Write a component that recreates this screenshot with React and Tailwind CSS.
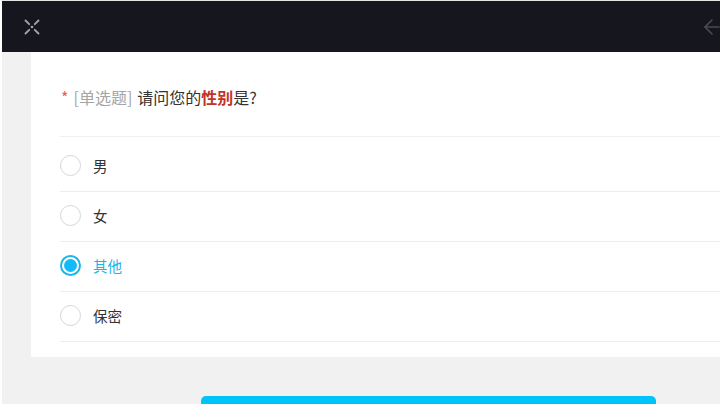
import { ArrowLeft } from 'lucide-react'

const options = [
  { label: '男', checked: false },
  { label: '女', checked: false },
  { label: '其他', checked: true },
  { label: '保密', checked: false },
]

function CloseIcon() {
  return (
    <svg width="20" height="20" viewBox="0 0 20 20" fill="none" stroke="#a3a3a8" strokeWidth="1.9" strokeLinecap="round">
      <path d="M3.5 3.5 L7.2 7.2" />
      <path d="M16.5 3.5 L12.8 7.2" />
      <path d="M3.5 16.5 L7.2 12.8" />
      <path d="M16.5 16.5 L12.8 12.8" />
      <circle cx="10" cy="10" r="1.3" fill="#a3a3a8" stroke="none" />
    </svg>
  )
}

function Radio({ checked }) {
  if (checked) {
    return (
      <span className="flex items-center justify-center w-[21px] h-[21px] rounded-full border-2 border-[#15b7ec] bg-white">
        <span className="w-[13px] h-[13px] rounded-full bg-[#0fbcf9]" />
      </span>
    )
  }
  return <span className="w-[21px] h-[21px] rounded-full border-[1.5px] border-[#d6d6d6] bg-white" />
}

function App() {
  return (
    <div
      className="w-[720px] h-[404px] overflow-hidden flex flex-col bg-[#f1f1f1] border-t border-[#e4e4e4] border-l-2 border-l-white"
      style={{ fontFamily: '"Noto Sans CJK SC", "Noto Sans", sans-serif' }}
    >
      {/* Top bar */}
      <header className="h-[51px] shrink-0 bg-[#16161f] flex items-center justify-between pl-[20px]">
        <CloseIcon />
        <ArrowLeft size={24} strokeWidth={1.6} color="#4b4b52" className="mr-[-4px]" />
      </header>

      {/* Question card */}
      <div className="flex pl-[29px]">
        <div className="flex-1 bg-white pl-[29px] pb-[15px]">
          <div className="h-[85px] pt-[35px] pl-[1px] border-b border-[#efefef] text-[16px] leading-[20px] flex items-start">
            <span className="text-[#e8604f] mr-[5px]">*</span>
            <span className="text-[#a5a5a5] mr-[5px]">[单选题]</span>
            <span className="text-[#333333]">请问您的</span>
            <span className="text-[#c0342b] font-bold">性别</span>
            <span className="text-[#333333]">是?</span>
          </div>
          <div className="pt-[5px]">
            {options.map((o) => (
              <div key={o.label} className="h-[50px] pb-[2px] flex items-center gap-[12px] border-b border-[#ececec]">
                <Radio checked={o.checked} />
                <span className={`text-[14.5px] ${o.checked ? 'text-[#1eb4e6]' : 'text-[#333333]'}`}>{o.label}</span>
              </div>
            ))}
          </div>
        </div>
      </div>

      {/* Submit button (cut off) */}
      <div className="flex-1 pt-[39px] pl-[199px]">
        <div className="w-[455px] h-[40px] rounded-t-[5px] bg-[#00c3fa]" />
      </div>
    </div>
  )
}

export default App
